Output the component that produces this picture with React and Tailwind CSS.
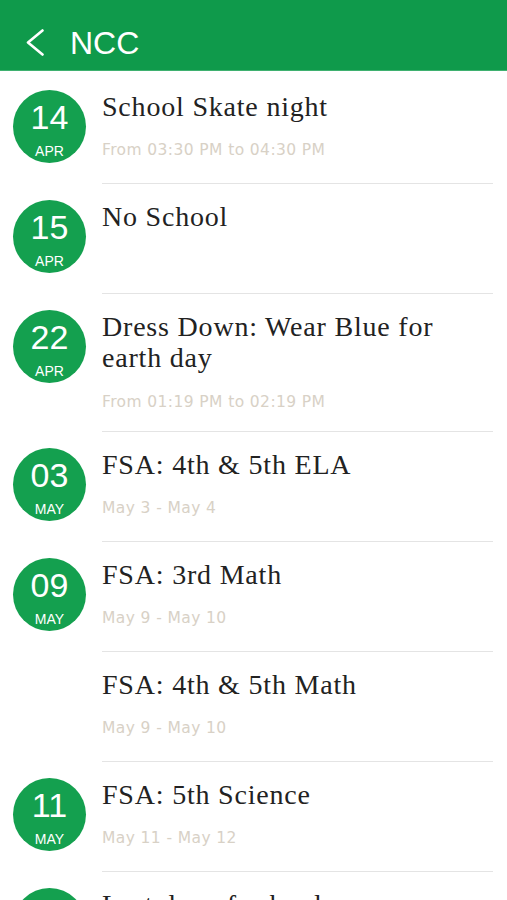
import React from "react";

const events = [
  { day: "14", mon: "APR", title: "School Skate night", sub: "From 03:30 PM to 04:30 PM" },
  { day: "15", mon: "APR", title: "No School", sub: "" },
  { day: "22", mon: "APR", title: "Dress Down: Wear Blue for earth day", sub: "From 01:19 PM to 02:19 PM", two: true },
  { day: "03", mon: "MAY", title: "FSA: 4th & 5th ELA", sub: "May 3 - May 4" },
  { day: "09", mon: "MAY", title: "FSA: 3rd Math", sub: "May 9 - May 10" },
  { day: "", mon: "", title: "FSA: 4th & 5th Math", sub: "May 9 - May 10" },
  { day: "11", mon: "MAY", title: "FSA: 5th Science", sub: "May 11 - May 12" },
  { day: "27", mon: "MAY", title: "Last day of school", sub: "May 27 - May 28" },
];

function Row({ e }) {
  return (
    <div className="flex">
      <div className="w-[102px] shrink-0">
        {e.day && (
          <div className="ml-[13px] mt-[16px] w-[73px] h-[73px] rounded-full bg-[#14a04f] flex flex-col items-center text-white font-['Liberation_Sans',Arial,sans-serif]">
            <div className="pt-[11px] text-[34px] leading-[33px]">{e.day}</div>
            <div className="mt-[10px] text-[14px] leading-[14px]">{e.mon}</div>
          </div>
        )}
      </div>
      <div className={`flex-1 mr-[14px] border-b border-[#e4e4e4] pt-[17px] ${e.two ? "pb-[19px]" : "pb-[23px]"}`}>
        <div className="font-['Liberation_Serif','Times_New_Roman',serif] text-[28px] leading-[31px] tracking-[0.8px] text-[#222222]">
          {e.title}
        </div>
        <div className={`${e.two ? "mt-[19px]" : "mt-[18px]"} h-[20px] font-['DejaVu_Sans',sans-serif] text-[15.5px] leading-[20px] tracking-[0.4px] text-[#d8d1c6]`}>
          {e.sub}
        </div>
      </div>
    </div>
  );
}

export default function App() {
  return (
    <div className="w-[507px] h-[900px] overflow-hidden bg-white">
      <div className="h-[71px] bg-[#0f9a4b] pt-[16px] flex items-center border-b border-[#3fb170]">
        <svg className="ml-[25px]" width="20" height="28" viewBox="0 0 20 28" fill="none">
          <path d="M17.5 1.5 L3 13.5 L17.5 25.5" stroke="white" strokeWidth="2.6" strokeLinecap="round" strokeLinejoin="round" />
        </svg>
        <div className="ml-[25px] text-white text-[32px] leading-[32px] font-['Liberation_Sans',Arial,sans-serif]">NCC</div>
      </div>
      <div className="pt-[3px]">
        {events.map((e, i) => (
          <Row key={i} e={e} />
        ))}
      </div>
    </div>
  );
}
